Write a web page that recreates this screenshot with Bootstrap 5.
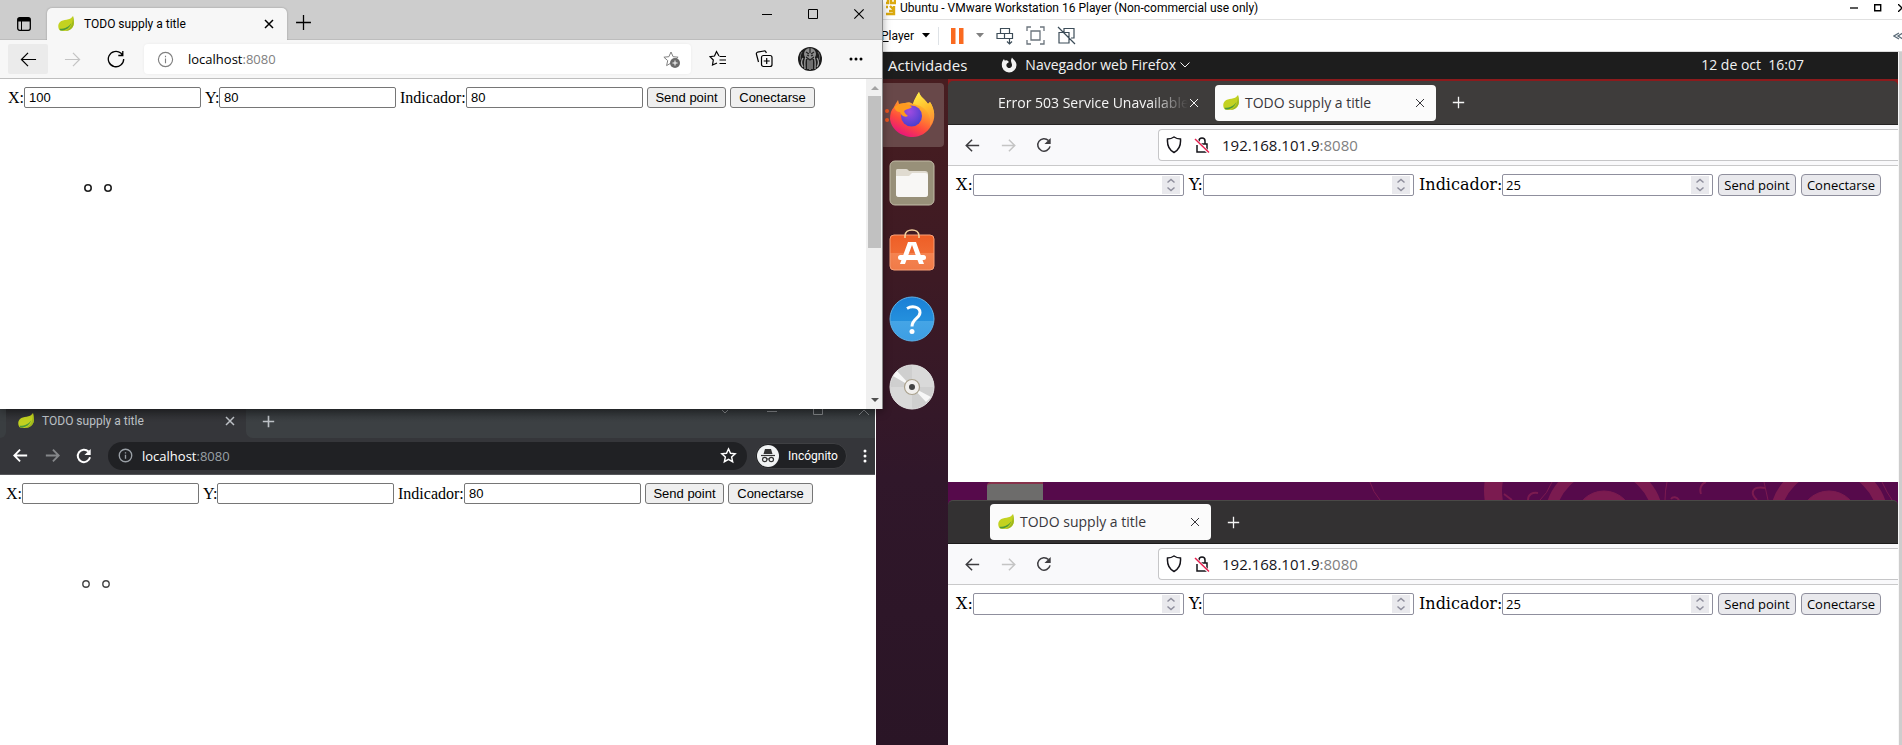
<!DOCTYPE html>
<html lang="es">
<head>
<meta charset="utf-8">
<meta name="viewport" content="width=device-width, initial-scale=1">
<title>TODO supply a title</title>
<link href="https://cdn.jsdelivr.net/npm/bootstrap@5.3.0/dist/css/bootstrap.min.css" rel="stylesheet">
<style>
  body { font-family: "Open Sans", "Noto Sans", sans-serif; font-size: 13px; line-height: 20px; color: #000; background: #fff; }
  svg { display: block; flex: none; }
  button { font: inherit; color: inherit; }
  .ic { border: 0; background: none; padding: 0; flex: none; display: flex; align-items: center; justify-content: center; }
  .line { fill: none; stroke: currentColor; }

  /* three windows share one grid; the Edge window lies over the VM's left edge */
  .desk { display: grid; grid-template-columns: minmax(0, 876fr) 7px minmax(0, 1019fr); grid-template-rows: 409px minmax(0, 1fr); height: 100vh; overflow: hidden; }
  .edge { grid-area: 1 / 1 / 2 / 3; z-index: 2; background: #fff; border-right: 1px solid #8a8a8a; box-shadow: 0 3px 8px rgba(0,0,0,.35); }
  .chrome { grid-area: 2 / 1 / 3 / 2; z-index: 1; background: #fff; border-right: 1px solid #fff; }
  .vm { grid-area: 1 / 2 / 3 / 4; background: #fff; }

  .win-title { font-family: Roboto, "Open Sans", sans-serif; font-size: 12px; }

  .edge-strip { height: 40px; background: #cdcdcd; border-bottom: 1px solid #bdbdbd; }
  .edge-side { width: 47px; height: 47px; margin-bottom: -8px; }
  .edge-tab { width: 240px; height: 32px; margin-bottom: -1px; gap: 10px; background: #f7f7f7; border-radius: 5px 5px 0 0; padding: 0 8px 0 11px; box-shadow: 0 0 2px rgba(0,0,0,.3); clip-path: inset(-3px -3px 0 -3px); }
  .edge-bar { height: 39px; background: #f7f7f7; border-bottom: 1px solid #bfbfbf; padding: 0 3px 0 8px; }
  .edge-nav { width: 40px; height: 30px; margin-right: 4px; border-radius: 2px; }
  .edge-nav.on { background: #ebebeb; }
  .off { color: #c4c4c4; }
  .edge-url { height: 30px; background: #fff; border-radius: 4px; padding: 0 11px 0 13px; gap: 14px; box-shadow: 0 0 3px rgba(0,0,0,.06); }
  .muted { color: #808080; }
  .win-btn { width: 46px; height: 28px; }

  .page-form { font: 16px/20px "Liberation Serif", serif; }
  .page-form input, .page-form button { font: 13px/15px "Liberation Sans", Arial, sans-serif; color: #000; }
  .box-in { width: 177px; height: 21px; border: 1px solid #767676; border-radius: 2px; padding: 1px 4px; margin-right: 4px; background: #fff; }
  .box-btn { height: 21px; border: 1px solid #767676; border-radius: 3px; background: #efefef; padding: 0; margin-right: 4px; }
  .w-send { width: 79px; } .w-con { width: 85px; }
  .lab-x { width: 16px; } .lab-y { width: 14px; } .lab-i { width: 66px; }

  .edge-scroll { width: 16px; background: #f0f0f0; }
  .edge-thumb { width: 13px; height: 152px; background: #c1c1c1; }

  .chrome-strip { height: 29px; color: #bdc1c6; background: linear-gradient(#2f3336, #3c4043 12px); }
  .chrome-lead { width: 6px; height: 29px; background: #35363a; }
  .chrome-lead::before { content: ""; display: block; height: 29px; background: #3a3e41; border-radius: 0 0 7px 0; }
  .chrome-tab { width: 240px; gap: 8px; background: linear-gradient(#2b2c2f, #35363a 12px); padding: 0 10px 5px 12px; }
  .chrome-rest { background: #35363a; }
  .chrome-rest > div { height: 29px; background: linear-gradient(#2f3336, #3c4043 12px); border-radius: 0 0 0 7px; }
  .chrome-bar { height: 37px; background: #35363a; border-bottom: 1px solid #56575b; padding-bottom: 1px; }
  .chrome-nav { width: 32px; height: 28px; }
  .chrome-nav.off { color: #85878a; }
  .chrome-url { height: 28px; border-radius: 14px; background: #202124; padding: 0 10px; gap: 9px; }
  .chrome-url .muted { color: #9aa0a6; }
  .chrome-pill { width: 92px; height: 26px; border-radius: 13px; background: #202124; color: #fff; border: 1px solid #3f4043; }

  .vm-title { height: 20px; padding: 0 0 4px 10px; border-bottom: 1px solid #e0e0e0; }
  .vm-tools { height: 32px; padding-left: 5px; border-bottom: 1px solid #dcdcdc; }
  .vm-tools .sep { height: 18px; }
  .vm-tools .gap-a { margin-left: 12px; }
  .slate { color: #3c4c58; }
  .vm-side { width: 4px; background: #cdcdcd; border-left: 1px solid #f7f7f7; }
  .gnome { height: 27px; background: #1d1d1d; color: #f2f2f2; font-size: 14px; padding: 0 94px 1px 12px; }
  .gnome .act { font-size: 15px; margin-right: 34px; }
  .dock { width: 72px; padding: 4px; gap: 4px; background: linear-gradient(#481d20, #3d1a24 30%, #30172a 60%, #2a1526); }
  .dock-item { height: 64px; border-radius: 4px; position: relative; }
  .dock-on { background: #684849; }
  .dock-on .dots { position: absolute; left: 1px; top: 26px; }
  .fx-strip { height: 44px; border-radius: 5px 5px 0 0; color: #f5f5f5; }
  .fx-strip.dark1 { background: #3e3c3b; border-bottom: 1px solid #252323; padding-left: 46px; }
  .fx-strip.dark2 { background: #333132; border-bottom: 1px solid #1c1b1b; border-top: 1px solid #4a4947; padding-left: 42px; }
  .red-edge { background: #8c1a1c; padding-top: 2px; }
  .purple { background: #560a4b; }
  .fx-tab { width: 221px; height: 36px; padding: 0 10px 0 8px; gap: 6px; font-size: 14px; flex: none; }
  .fx-idle { padding: 0 15px 0 4px; gap: 0; }
  .fx-idle span { -webkit-mask-image: linear-gradient(90deg, #000 80%, transparent); mask-image: linear-gradient(90deg, #000 80%, transparent); }
  .fx-active { background: #fbfbfb; color: #38373c; border-radius: 4px; }
  .fx-bar { height: 41px; background: #f9f9fb; border-bottom: 1px solid #c9c9ca; padding-left: 6px; color: #3d3c40; }
  .fx-nav { width: 36px; height: 32px; }
  .fx-url { height: 32px; border: 1px solid #c6c6c8; border-right: 0; border-radius: 4px 0 0 4px; background: #fff; margin-left: 96px; padding-left: 7px; gap: 10px; font-size: 15px; color: #15141a; }
  .fx-form { font-family: "DejaVu Serif", serif; padding: 8px 0 0 8px; }
  .fx-form input, .fx-form button { font: 13px/16px "Open Sans", "Noto Sans", sans-serif; }
  .fx-in { width: 211px; height: 22px; border: 1px solid #8f8f9d; border-radius: 2px; background: #fff; margin-right: 5px; padding-right: 3px; flex: none; }
  .fx-in input { border: 0; background: none; padding: 0 3px; min-width: 0; }
  .fx-in .spin { background: #e9e9ed; border: 0; width: 18px; height: 18px; padding: 0; color: #8f8f9d; }
  .fx-btn { height: 22px; border: 1px solid #8f8f9d; border-radius: 4px; background: #e9e9ed; padding: 0; margin-right: 5px; }
  .w-send2 { width: 78px; } .w-con2 { width: 80px; }
  .fx-form .lab-x { width: 17px; } .fx-form .lab-y { width: 14px; } .fx-form .lab-i { width: 83px; }
  .fx-page1 { height: 316px; background: #fff; }
  .paper { height: 18px; overflow: hidden; }
  .desk-folder { width: 56px; height: 18px; margin-left: 39px; background: #6d6c6b; border-top: 2px solid #87324b; border-top-left-radius: 4px; }
  .chrome-page { padding: 8px 0 0 6px; }
  .shrinkable { min-width: 0; }
</style>
</head>
<body>
<svg width="0" height="0" class="position-absolute" aria-hidden="true">
  <defs>
    <linearGradient id="gFlame" x1="0.8" y1="0" x2="0.3" y2="1"><stop offset="0" stop-color="#fff34f"/><stop offset=".35" stop-color="#ffa52a"/><stop offset=".7" stop-color="#ff4a3d"/><stop offset="1" stop-color="#e6127f"/></linearGradient>
    <linearGradient id="gTail" x1="0" y1="0" x2="0.3" y2="1"><stop offset="0" stop-color="#fff44f"/><stop offset=".6" stop-color="#ffbd2b"/><stop offset="1" stop-color="#ff9139"/></linearGradient>
    <radialGradient id="gGlobe" cx=".4" cy=".3" r=".7"><stop offset="0" stop-color="#a14be0"/><stop offset="1" stop-color="#4a3fd0"/></radialGradient>
    <linearGradient id="gBlue" x1="0" y1="0" x2="0" y2="1"><stop offset="0" stop-color="#1a7fd6"/><stop offset=".54" stop-color="#2490dd"/><stop offset=".55" stop-color="#45a5e6"/><stop offset="1" stop-color="#3d9ee3"/></linearGradient>
    <linearGradient id="gBag" x1="0" y1="0" x2="0" y2="1"><stop offset="0" stop-color="#ee5e26"/><stop offset=".5" stop-color="#f06a32"/><stop offset=".51" stop-color="#f58350"/><stop offset="1" stop-color="#f07b48"/></linearGradient>
  </defs>
  <symbol id="leaf" viewBox="0 0 16 16"><path d="M15 0c1 5 1.600 9-1 12-2.500 3-7.500 3.500-12 2.500C0 12.500-.6 8.500 2 6c3-3 10-1 13-6z" fill="#c3d220"/><path d="M15 0c1 5 1.600 9-1 12-1.500 2-4 3-7 3 5-2 8-6 8-15z" fill="#9fb81c"/><path d="M1.500 12.800c5 .2 9.500-1.800 12-5.800-1.500 4.500-5 7.500-11 7.600z" fill="#4c9a3a"/></symbol>
  <symbol id="x" viewBox="0 0 12 12"><path class="line" d="M2 2l8 8M10 2l-8 8"/></symbol>
  <symbol id="plus" viewBox="0 0 16 16"><path class="line" d="M8 1v14M1 8h14"/></symbol>
  <symbol id="back" viewBox="0 0 18 18"><path class="line" d="M17 9H1.500M8.500 2l-7 7 7 7"/></symbol>
  <symbol id="fwd" viewBox="0 0 18 18"><path class="line" d="M1 9h15.500M9.500 2l7 7-7 7"/></symbol>
  <symbol id="reload" viewBox="0 0 18 18"><path class="line" d="M16.700 9A7.700 7.700 0 1 1 13.800 3L15.500 5M15.800 1v4.500h-4.500"/></symbol>
  <symbol id="reloadfill" viewBox="0 0 18 18"><path class="line" d="M15.800 10.500A7 7 0 1 1 14 4"/><path d="M16.500 1v7h-7z" fill="currentColor"/></symbol>
  <symbol id="info" viewBox="0 0 18 18"><circle class="line" cx="9" cy="9" r="7.500"/><path class="line" d="M9 8v5M9 5v1.500"/></symbol>
  <symbol id="star" viewBox="0 0 18 18"><path class="line" d="M9 2l2.100 4.700 5 .5-3.800 3.400 1.100 5L9 13l-4.400 2.600 1.100-5L1.900 7.200l5-.5z"/></symbol>
  <symbol id="shield" viewBox="0 0 16 18"><path class="line" d="M8 1c2 1.400 4.200 2 6.500 2C15 9.500 13 14 8 16.500 3 14 1 9.500 1.500 3 3.800 3 6 2.400 8 1z"/></symbol>
  <symbol id="lock" viewBox="0 0 16 18"><path class="line" stroke-width="1.500" d="M3 9v7h10V8H5.500M5 7V5a3 3 0 0 1 6 0v3"/><path d="M1 3l14 14" stroke="#fff" stroke-width="3"/><path d="M1 3l14 13.500" stroke="#e6204f" stroke-width="1.500"/></symbol>
  <symbol id="spin" viewBox="0 0 18 18"><path class="line" stroke-width="1.500" d="M5.500 6.500L9 3.500l3.500 3M5.500 11.500l3.500 3 3.500-3"/></symbol>
</svg>

<main class="desk">

  <!-- Edge -->
  <section class="edge d-flex flex-column">
    <div class="edge-strip d-flex align-items-end flex-shrink-0">
      <button class="ic edge-side" aria-label="Tabs"><svg width="14" height="14" viewBox="0 0 14 14"><rect class="line" x=".7" y=".7" width="12.600" height="12.600" rx="2" stroke-width="1.300"/><path d="M1 1h12v3.500H1z"/><path class="line" d="M4.500 4v9"/></svg></button>
      <div class="edge-tab d-flex align-items-center win-title">
        <svg width="16" height="16"><use href="#leaf"/></svg><span>TODO supply a title</span>
        <button class="ic ms-auto me-1" aria-label="Close"><svg width="12" height="12" stroke-width="1.500"><use href="#x"/></svg></button>
      </div>
      <button class="ic ms-2 mb-2" aria-label="New tab"><svg width="17" height="17" stroke-width="1.200"><use href="#plus"/></svg></button>
      <div class="d-flex ms-auto align-self-start">
        <button class="ic win-btn" aria-label="Minimize"><svg width="11" height="11"><path d="M0 5.500h10" stroke="#000"/></svg></button>
        <button class="ic win-btn" aria-label="Maximize"><svg width="11" height="11"><path class="line" d="M.5.500h9v9h-9z"/></svg></button>
        <button class="ic win-btn" aria-label="Close window"><svg width="14" height="14"><use href="#x"/></svg></button>
      </div>
    </div>
    <div class="edge-bar d-flex align-items-center flex-shrink-0">
      <button class="ic edge-nav on" aria-label="Back"><svg width="17" height="17" stroke-width="1.300"><use href="#back"/></svg></button>
      <button class="ic edge-nav off" aria-label="Forward"><svg width="17" height="17" stroke-width="1.300"><use href="#fwd"/></svg></button>
      <button class="ic edge-nav" aria-label="Reload"><svg width="18" height="18" stroke-width="1.300"><use href="#reload"/></svg></button>
      <div class="edge-url d-flex align-items-center flex-grow-1 ms-1">
        <svg class="muted" width="17" height="17" stroke-width="1.200"><use href="#info"/></svg>
        <span class="flex-grow-1">localhost<span class="muted">:8080</span></span>
        <svg class="muted" width="18" height="18" viewBox="0 0 18 18"><use href="#star"/><circle cx="13" cy="13" r="5" fill="#6b6b6b"/><path d="M13 10.500v5M10.500 13h5" stroke="#fff"/></svg>
      </div>
      <div class="d-flex align-items-center ps-1">
        <button class="ic win-btn" aria-label="Favorites"><svg width="18" height="18" viewBox="0 0 18 18"><path class="line" stroke-width="1.200" d="M10 6L7.500 1.500 5.500 6 1 6.700 4.300 10l-.8 5L8 13M10.500 6.500H17M10.500 10H17M10.500 13.500H17"/></svg></button>
        <button class="ic win-btn" aria-label="Collections"><svg width="18" height="18" viewBox="0 0 18 18"><rect class="line" x="6.500" y="5.500" width="10.500" height="11" rx="2" stroke-width="1.200"/><path class="line" stroke-width="1.200" d="M3.500 12L1.500 4.500c-.3-1 0-2 1-2.300L9 1c1-.2 1.800.2 2 1l.3 1M11.700 8v6M8.700 11h6"/></svg></button>
        <button class="ic win-btn" aria-label="Profile"><svg width="24" height="24" viewBox="0 0 24 24"><circle cx="12" cy="12" r="12" fill="#1c1c1c"/><ellipse cx="12" cy="7" rx="6" ry="6" fill="#8d8d8d"/><path d="M5 11c-2 3-2 6 0 9M8 10c-2 4-1 8-1 12M16 10c2 4 1 8 1 12M19 11c2 3 2 6 0 9M12 12v11M10 13v9M14 13v9" stroke="#a8a8a8" stroke-width="1.200" fill="none"/><path d="M8 5l3 2M16 5l-3 2M12 1v5M8 10l4 3 4-3M9 8l2 1M15 8l-2 1" stroke="#222" stroke-width="1.200" fill="none"/><path d="M4 5c-2 3-2 5-1 8M20 5c2 3 2 5 1 8" stroke="#666" fill="none"/></svg></button>
        <button class="ic win-btn" aria-label="Menu"><svg width="14" height="4"><circle cx="2" cy="2" r="1.500"/><circle cx="7" cy="2" r="1.500"/><circle cx="12" cy="2" r="1.500"/></svg></button>
      </div>
    </div>
    <div class="d-flex flex-grow-1">
      <div class="flex-grow-1 ps-2 pt-2">
        <form class="page-form d-flex align-items-center">
          <label class="lab-x" for="ex">X:</label><input class="box-in" id="ex" value="100">
          <label class="lab-y" for="ey">Y:</label><input class="box-in" id="ey" value="80">
          <label class="lab-i" for="ei">Indicador:</label><input class="box-in" id="ei" value="80">
          <button type="button" class="box-btn w-send">Send point</button><button type="button" class="box-btn w-con">Conectarse</button>
        </form>
        <svg width="300" height="150" fill="#fff" stroke="#222" stroke-width="1.600"><circle cx="80" cy="80" r="3.200"/><circle cx="100" cy="80" r="3.200"/></svg>
      </div>
      <div class="edge-scroll d-flex flex-column align-items-center">
        <svg width="15" height="17"><path d="M4 11l4-4 4 4z" fill="#a3a3a3"/></svg>
        <div class="edge-thumb"></div>
        <svg class="mt-auto" width="15" height="17"><path d="M4 6l4 4 4-4z" fill="#505050"/></svg>
      </div>
    </div>
  </section>

  <!-- Chrome, incognito -->
  <section class="chrome">
    <div class="chrome-strip d-flex">
      <div class="chrome-lead"></div>
      <div class="chrome-tab d-flex align-items-center win-title">
        <svg width="16" height="16"><use href="#leaf"/></svg><span>TODO supply a title</span>
        <button class="ic ms-auto" aria-label="Close"><svg width="12" height="12" stroke-width="1.500"><use href="#x"/></svg></button>
      </div>
      <div class="chrome-rest flex-grow-1"><div class="d-flex">
        <button class="ic ms-3 mb-1" aria-label="New tab"><svg width="13" height="13" stroke-width="2"><use href="#plus"/></svg></button>
        <svg class="ms-auto" width="160" height="8" fill="none" stroke="#808386"><path d="M7 1l3 3 3-3M52 2.500h10M98.500 0v5.500h9V0M144 6l5-5 5 5"/></svg>
      </div></div>
    </div>
    <div class="chrome-bar d-flex align-items-center">
      <div class="d-flex ps-1 text-white">
        <button class="ic chrome-nav" aria-label="Back"><svg width="15" height="15" stroke-width="2.200"><use href="#back"/></svg></button>
        <button class="ic chrome-nav off" aria-label="Forward"><svg width="15" height="15" stroke-width="2.200"><use href="#fwd"/></svg></button>
        <button class="ic chrome-nav" aria-label="Reload"><svg width="16" height="16" stroke-width="2.200"><use href="#reloadfill"/></svg></button>
      </div>
      <div class="chrome-url d-flex align-items-center flex-grow-1 text-white ms-2">
        <svg class="muted" width="15" height="15" stroke-width="1.600"><use href="#info"/></svg>
        <span class="flex-grow-1">localhost<span class="muted">:8080</span></span>
        <svg width="17" height="17" stroke-width="1.500"><use href="#star"/></svg>
      </div>
      <div class="chrome-pill d-flex align-items-center ms-2">
        <svg width="24" height="24" viewBox="0 0 24 24"><circle cx="12" cy="12" r="11" fill="#f1f3f4"/><path d="M9 5h6l1.500 5h-9z" fill="#333"/><path d="M5 11.500h14" stroke="#333" stroke-width="1.200"/><circle cx="8.700" cy="15.500" r="2.200" fill="none" stroke="#333" stroke-width="1.200"/><circle cx="15.300" cy="15.500" r="2.200" fill="none" stroke="#333" stroke-width="1.200"/><path d="M10.900 15h2.200" stroke="#333"/></svg>
        <span class="win-title ps-2">Incógnito</span>
      </div>
      <button class="ic text-white ps-3 pe-2" aria-label="Menu"><svg width="4" height="14" fill="currentColor"><circle cx="2" cy="2" r="1.500"/><circle cx="2" cy="7" r="1.500"/><circle cx="2" cy="12" r="1.500"/></svg></button>
    </div>
    <div class="chrome-page">
      <form class="page-form d-flex align-items-center">
        <label class="lab-x" for="cx">X:</label><input class="box-in" id="cx">
        <label class="lab-y" for="cy">Y:</label><input class="box-in" id="cy">
        <label class="lab-i" for="ci">Indicador:</label><input class="box-in" id="ci" value="80">
        <button type="button" class="box-btn w-send">Send point</button><button type="button" class="box-btn w-con">Conectarse</button>
      </form>
      <svg width="300" height="150" fill="#fff" stroke="#444" stroke-width="1.400"><circle cx="80" cy="80" r="3.200"/><circle cx="100" cy="80" r="3.200"/></svg>
    </div>
  </section>

  <!-- VMware player with the Ubuntu desktop -->
  <section class="vm d-flex flex-column">
    <div class="vm-title d-flex align-items-center win-title flex-shrink-0">
      <svg width="10" height="16" viewBox="0 0 10 16" fill="none" stroke="#dba90f" stroke-width="2.400"><path d="M0 3h2V0M5 0v3h4V0M4 6l4 4M8 6v5H3M0 7h2M0 14h8v-3"/></svg>
      <span class="ps-1 text-nowrap">Ubuntu - VMware Workstation 16 Player (Non-commercial use only)</span>
      <div class="d-flex ms-auto align-items-center">
        <button class="ic me-3" aria-label="Minimize"><svg width="8" height="8"><path d="M0 4h8" stroke="#000" stroke-width="1.300"/></svg></button>
        <button class="ic me-3" aria-label="Maximize"><svg width="8" height="8"><path class="line" stroke-width="1.400" d="M.7.700h6v6h-6z"/></svg></button>
        <button class="ic" aria-label="Close window"><svg width="4" height="8"><path class="line" stroke-width="1.300" d="M0 0l4 4-4 4"/></svg></button>
      </div>
    </div>
    <div class="vm-tools d-flex align-items-center flex-shrink-0">
      <button class="ic win-title"><span><u>P</u>layer</span><svg class="ms-2" width="8" height="5"><path d="M0 0h8L4 4.500z"/></svg></button>
      <span class="sep border-start ms-2"></span>
      <button class="ic gap-a" aria-label="Pause"><svg width="13" height="16" fill="#fa6a20"><path d="M0 0h4.500v16H0zM8 0h4.500v16H8z"/></svg></button>
      <svg class="gap-a" width="8" height="5" fill="#808080"><path d="M0 0h8L4 4.500z"/></svg>
      <button class="ic gap-a slate" aria-label="Send keys"><svg width="18" height="18" viewBox="0 0 18 18"><path class="line" stroke-width="1.200" d="M4.500 6.500v-5h9v5M1 6.500h15.500v5H1zM8.500 6.500v5M13.500 11v6M11 14.500l2.500 2.500 2.500-2.500"/></svg></button>
      <button class="ic gap-a text-secondary" aria-label="Full screen"><svg width="19" height="19" viewBox="0 0 19 19"><path class="line" stroke-width="1.300" d="M5 5h9v9H5zM1 5V1h4M14 1h4v4M18 14v4h-4M5 18H1v-4"/></svg></button>
      <button class="ic gap-a slate" aria-label="Unity"><svg width="19" height="19" viewBox="0 0 19 19"><path class="line" stroke-width="1.200" d="M7 6V2.500h10V12h-3M2 6.500h10V17H2zM1 1l17 17"/></svg></button>
      <svg class="ms-auto" width="9" height="10" viewBox="0 0 9 10"><path d="M6 2L1 5l5 3M10 2L5 5l5 3" fill="none" stroke="#5b6b78" stroke-width="1.300"/></svg>
    </div>
    <div class="d-flex flex-grow-1">
      <div class="d-flex flex-column flex-grow-1 shrinkable">
        <div class="gnome d-flex align-items-center flex-shrink-0">
          <span class="act">Actividades</span>
          <svg width="16" height="16" viewBox="0 0 16 16"><path d="M8 15.500A7.300 7.300 0 0 1 .8 7.500C.8 5 2 3 3 2l.6 1.500L6 3.200 8 5 6 6.500c-1.500 2 0 4.500 2.200 4.500 2.500 0 3.500-2.500 2.300-5C10 4.500 9.500 3 11 .5c.5 1.500 4.500 3.500 4.500 7.500a7.500 7.500 0 0 1-7.500 7.500z" fill="#f2f2f2"/></svg>
          <span class="text-nowrap ps-2">Navegador web Firefox</span>
          <svg class="ms-1" width="10" height="6"><path class="line" d="M.5.500l4.500 4.500L9.500.500" stroke="#ddd"/></svg>
          <span class="ms-auto text-nowrap">12 de oct&nbsp; 16:07</span>
        </div>
        <div class="d-flex flex-grow-1">
          <nav class="dock d-flex flex-column flex-shrink-0">
            <div class="dock-item dock-on ic"><svg class="dots" width="8" height="13" fill="#e95420"><circle cx="6" cy="2" r="2"/><circle cx="6" cy="11" r="2"/></svg><svg width="48" height="48" viewBox="0 0 48 48"><path d="M6 16c1-3 3-5 4-7l1 4 6-1c3-1 5-1 8 1 1-4 4-9 6-12 1 5 6 7 9 12l2-2c5 7 6 17 1 24-4 7-11 11-18 11C13 46 3 38 2 28c0-5 1-9 4-12z" fill="url(#gFlame)"/><path d="M25 13c1-4 4-9 6-12 1 5 6 7 9 12l2-2c5 8 5 17 0 24 1-8-1-15-8-19-3-2-6-2-9-3z" fill="url(#gTail)"/><circle cx="23.500" cy="25" r="10.500" fill="url(#gGlobe)"/><path d="M6 16l5-3 6-1 7 4c-2 2-6 2-8 4 1 3 3 4 4 5-4 2-7-1-8-4-3 0-5-2-6-5z" fill="#ff9a1f"/></svg></div>
            <div class="dock-item ic"><svg width="46" height="46" viewBox="0 0 46 46"><rect x="1" y="1" width="44" height="44" rx="5" fill="#989079" stroke="#c3bca8"/><path d="M7 11c0-2 1-2 2-2h8c2 0 2 1 3 2h16c2 0 3 1 3 3v20c0 2-1 3-3 3H10c-2 0-3-1-3-3z" fill="#e0dbd0"/><path d="M7 16h13l3-3h13c2 0 3 1 3 3v18c0 2-1 3-3 3H10c-2 0-3-1-3-3z" fill="#f8f7f5"/></svg></div>
            <div class="dock-item ic"><svg width="46" height="46" viewBox="0 0 46 46"><rect x="1" y="7" width="44" height="35" rx="4" fill="url(#gBag)" stroke="#f8a078"/><path d="M16 10V8c0-8 14-8 14 0v2" fill="none" stroke="#f3d09c" stroke-width="1.600"/><path d="M11 36l8-22h8l8 22h-5l-7-19-7 19z" fill="#fff"/><rect x="9" y="27" width="28" height="5" rx="2.500" fill="#fff"/></svg></div>
            <div class="dock-item ic"><svg width="46" height="46" viewBox="0 0 46 46"><circle cx="23" cy="23" r="22" fill="url(#gBlue)" stroke="#5db2ea"/><path d="M18 12.500c5-3 13-2 13 4 0 6-8 6-8 14" fill="none" stroke="#fff" stroke-width="3"/><circle cx="23" cy="35.500" r="2.500" fill="#fff"/></svg></div>
            <div class="dock-item ic"><svg width="46" height="46" viewBox="0 0 46 46"><circle cx="23" cy="23" r="22" fill="#cfcfcf" stroke="#e6e6e6"/><path d="M23 1a22 22 0 0 1 22 22H23zM1 23h22v22A22 22 0 0 1 1 23z" fill="#d9d9d9"/><path d="M23 23L4 12l4-5zM23 23l14 15 5-5z" fill="#f7f7f7"/><circle cx="23" cy="23" r="7.500" fill="#f2f0ee" stroke="#aaa18d" stroke-width="1.200"/><circle cx="23" cy="23" r="3" fill="#444"/></svg></div>
          </nav>
          <div class="flex-grow-1 bg-white d-flex flex-column shrinkable">
            <div class="red-edge"><div class="fx-strip dark1 d-flex align-items-center">
              <div class="fx-tab fx-idle d-flex align-items-center"><span class="text-nowrap overflow-hidden flex-grow-1">Error 503 Service Unavailable</span><button class="ic" aria-label="Close"><svg width="12" height="12"><use href="#x"/></svg></button></div>
              <div class="fx-tab fx-active d-flex align-items-center"><svg width="16" height="16"><use href="#leaf"/></svg><span>TODO supply a title</span><button class="ic ms-auto" aria-label="Close"><svg width="12" height="12"><use href="#x"/></svg></button></div>
              <button class="ic ms-3" aria-label="New tab"><svg width="13" height="13" stroke-width="1.600"><use href="#plus"/></svg></button>
            </div></div>
            <div class="fx-bar d-flex align-items-center">
              <button class="ic fx-nav" aria-label="Back"><svg width="15" height="15" stroke-width="1.800"><use href="#back"/></svg></button>
              <button class="ic fx-nav off" aria-label="Forward"><svg width="15" height="15" stroke-width="1.800"><use href="#fwd"/></svg></button>
              <button class="ic fx-nav" aria-label="Reload"><svg width="16" height="16" stroke-width="1.700"><use href="#reloadfill"/></svg></button>
              <div class="fx-url d-flex align-items-center flex-grow-1"><svg width="16" height="18" stroke-width="1.500"><use href="#shield"/></svg><svg width="20" height="18"><use href="#lock"/></svg><span>192.168.101.9<span class="muted">:8080</span></span></div>
            </div>
            <div class="fx-page1">
              <form class="page-form fx-form d-flex align-items-center">
                <label class="lab-x" for="fx">X:</label><div class="fx-in d-flex align-items-center"><input class="flex-grow-1" id="fx"><button type="button" class="spin" aria-label="Step"><svg width="18" height="18"><use href="#spin"/></svg></button></div>
                <label class="lab-y" for="fy">Y:</label><div class="fx-in d-flex align-items-center"><input class="flex-grow-1" id="fy"><button type="button" class="spin" aria-label="Step"><svg width="18" height="18"><use href="#spin"/></svg></button></div>
                <label class="lab-i" for="fi">Indicador:</label><div class="fx-in d-flex align-items-center"><input class="flex-grow-1" id="fi" value="25"><button type="button" class="spin" aria-label="Step"><svg width="18" height="18"><use href="#spin"/></svg></button></div>
                <button type="button" class="fx-btn w-send2">Send point</button><button type="button" class="fx-btn w-con2">Conectarse</button>
              </form>
            </div>
            <div class="paper purple d-flex justify-content-between"><div class="desk-folder"></div>
              <svg width="540" height="18" viewBox="1358 482 540 18" fill="none" stroke="#7b1b50"><path d="M1494 480q-2 10 0 22" stroke-width="18"/><circle cx="1604" cy="520" r="54" stroke-width="11"/><circle cx="1604" cy="520" r="29" fill="#7b1b50"/><circle cx="1829" cy="520" r="54" stroke-width="11"/><circle cx="1829" cy="520" r="29" fill="#7b1b50"/><path d="M1370 482q3 10 10 18M1552 482q-5 12-12 18M1667 482q-2 9-2 18M1764 482l4 18M1882 482q5 11 10 18"/><path d="M1504 494l8 6M1528 500c0-6 5-8 10-7M1701 494c-2-6 1-11 5-12M1765 488c-12-2-16 4-8 12M1671 499c2-3 6-2 8 1" stroke-width="2"/></svg>
            </div>
            <div class="purple"><div class="fx-strip dark2 d-flex align-items-center">
              <div class="fx-tab fx-active d-flex align-items-center"><svg width="16" height="16"><use href="#leaf"/></svg><span>TODO supply a title</span><button class="ic ms-auto" aria-label="Close"><svg width="12" height="12"><use href="#x"/></svg></button></div>
              <button class="ic ms-3" aria-label="New tab"><svg width="13" height="13" stroke-width="1.600"><use href="#plus"/></svg></button>
            </div></div>
            <div class="fx-bar d-flex align-items-center">
              <button class="ic fx-nav" aria-label="Back"><svg width="15" height="15" stroke-width="1.800"><use href="#back"/></svg></button>
              <button class="ic fx-nav off" aria-label="Forward"><svg width="15" height="15" stroke-width="1.800"><use href="#fwd"/></svg></button>
              <button class="ic fx-nav" aria-label="Reload"><svg width="16" height="16" stroke-width="1.700"><use href="#reloadfill"/></svg></button>
              <div class="fx-url d-flex align-items-center flex-grow-1"><svg width="16" height="18" stroke-width="1.500"><use href="#shield"/></svg><svg width="20" height="18"><use href="#lock"/></svg><span>192.168.101.9<span class="muted">:8080</span></span></div>
            </div>
            <form class="page-form fx-form d-flex align-items-center">
              <label class="lab-x" for="gx">X:</label><div class="fx-in d-flex align-items-center"><input class="flex-grow-1" id="gx"><button type="button" class="spin" aria-label="Step"><svg width="18" height="18"><use href="#spin"/></svg></button></div>
              <label class="lab-y" for="gy">Y:</label><div class="fx-in d-flex align-items-center"><input class="flex-grow-1" id="gy"><button type="button" class="spin" aria-label="Step"><svg width="18" height="18"><use href="#spin"/></svg></button></div>
              <label class="lab-i" for="gi">Indicador:</label><div class="fx-in d-flex align-items-center"><input class="flex-grow-1" id="gi" value="25"><button type="button" class="spin" aria-label="Step"><svg width="18" height="18"><use href="#spin"/></svg></button></div>
              <button type="button" class="fx-btn w-send2">Send point</button><button type="button" class="fx-btn w-con2">Conectarse</button>
            </form>
          </div>
        </div>
      </div>
      <div class="vm-side"></div>
    </div>
  </section>
</main>
<script src="https://cdn.jsdelivr.net/npm/bootstrap@5.3.0/dist/js/bootstrap.bundle.min.js"></script>
</body>
</html>
